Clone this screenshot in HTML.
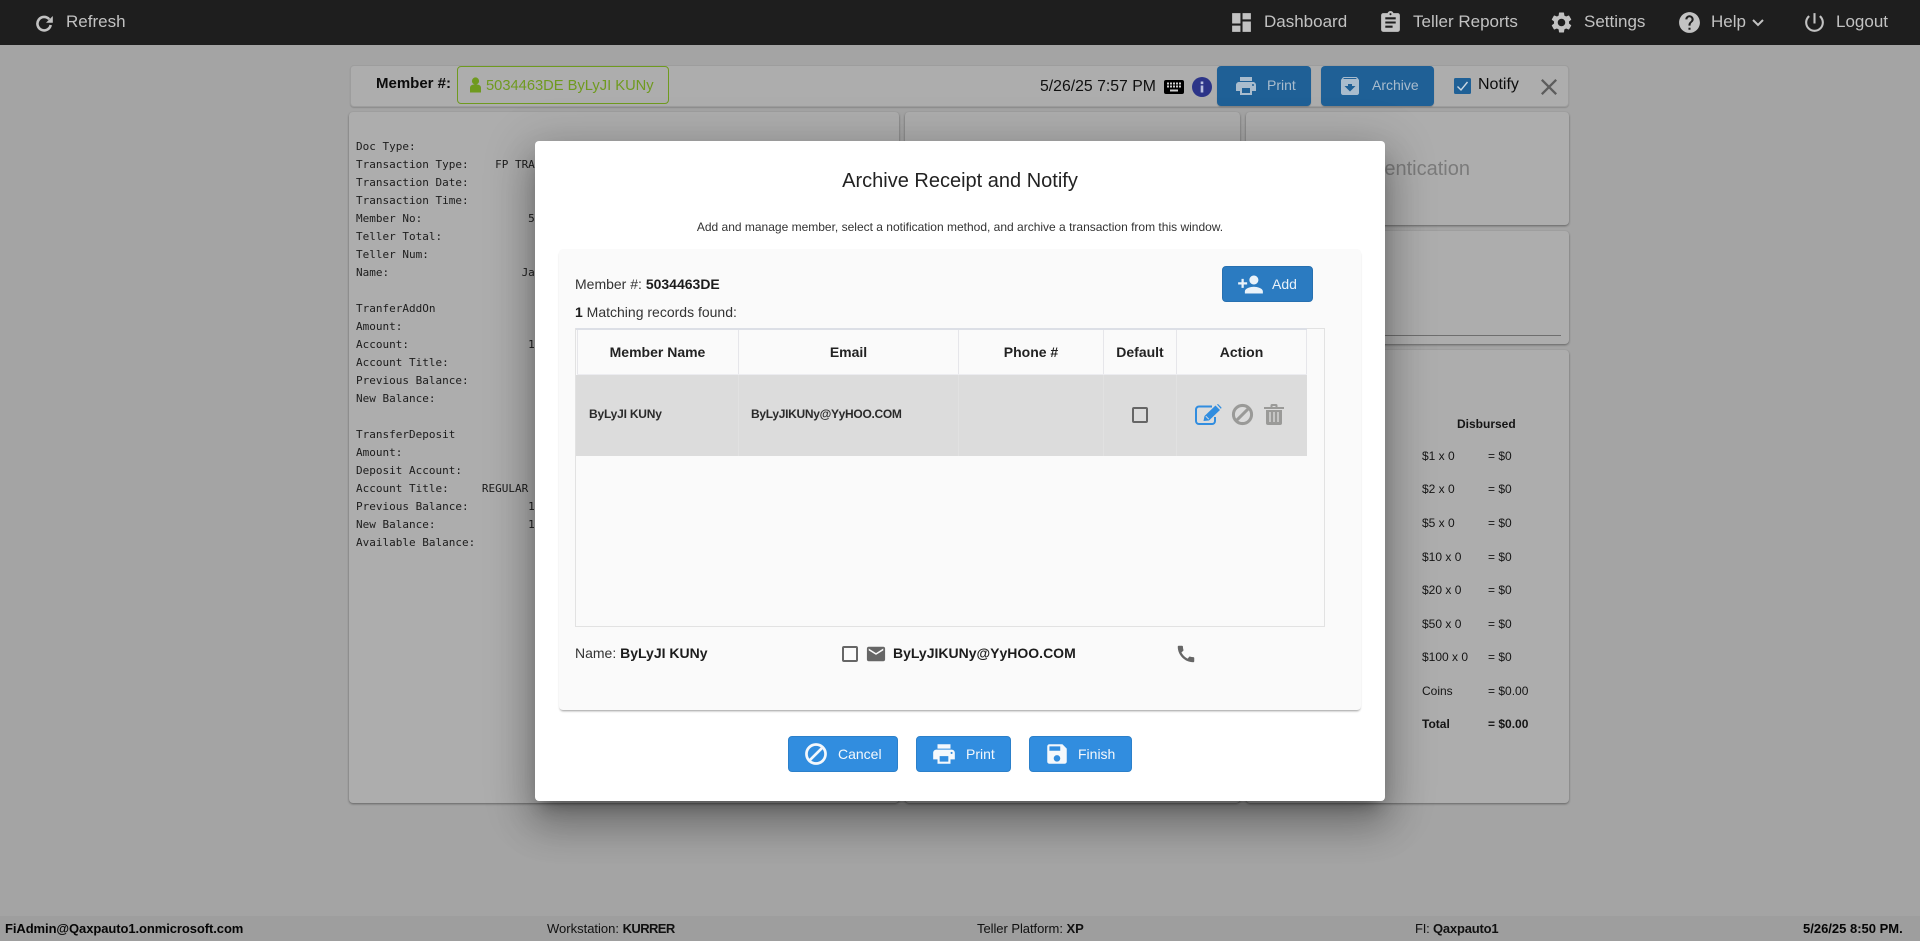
<!DOCTYPE html>
<html><head><meta charset="utf-8"><title>Archive Receipt and Notify</title>
<style>
*{box-sizing:border-box}
html,body{margin:0;padding:0;width:1920px;height:941px;overflow:hidden;background:#a4a4a4;font-family:"Liberation Sans",Arial,sans-serif;color:#111}
.a{position:absolute}
.t{position:absolute;white-space:nowrap;line-height:20px;height:20px}
svg{position:absolute;display:block}
nav{position:absolute;left:0;top:0;width:1920px;height:45px;background:#1e1e1e}
nav .t{font-size:17px;color:#c2c2c2;top:12px}
nav svg{fill:#c2c2c2}
.panel{position:absolute;background:#adadad;border-radius:4px;box-shadow:0 1px 2px rgba(0,0,0,.4)}
.btn{position:absolute;border-radius:4px;color:#fff;font-size:14px}
.btn svg{fill:currentColor}
.top{background:#1f6096;color:#a9bccd;height:40px;top:66px;box-shadow:0 1px 1px rgba(0,0,0,.2)}
.mb{background:#318ddf;color:#f4f8fc;height:36px;top:736px;border:1px solid #2c80ca}
pre{position:absolute;left:356px;top:138px;margin:0;font:11px/18px "DejaVu Sans Mono",monospace;color:#1c1c1c}
.d{font-size:12px;color:#151515}
.modal{position:absolute;left:535px;top:141px;width:850px;height:660px;background:#fff;border-radius:4px;box-shadow:0 11px 15px -7px rgba(0,0,0,.3),0 24px 38px 3px rgba(0,0,0,.2),0 9px 46px 8px rgba(0,0,0,.18)}
.h{font-size:14px;font-weight:bold;color:#222;text-align:center}
.v{position:absolute;width:1px}
</style></head><body>

<nav>
<svg style="left:36px;top:15px;fill:none" width="17" height="17" viewBox="0 0 17 17"><path d="M13.2 4.300A6.700 6.700 0 1 0 14.700 10" fill="none" stroke="#c2c2c2" stroke-width="2.600"/><path d="M16.800 1v6.800H10z" fill="#c2c2c2"/></svg>
<div class="t" style="left:66px">Refresh</div>
<svg style="left:1229px;top:10px" width="25" height="25" viewBox="0 0 24 24"><path d="M3 13h8V3H3v10zm0 8h8v-6H3v6zm10 0h8V11h-8v10zm0-18v6h8V3h-8z"/></svg>
<div class="t" style="left:1264px">Dashboard</div>
<svg style="left:1378px;top:10px" width="25" height="25" viewBox="0 0 24 24"><path d="M19 3h-4.180C14.400 1.840 13.300 1 12 1c-1.300 0-2.400.84-2.820 2H5c-1.100 0-2 .9-2 2v14c0 1.100.9 2 2 2h14c1.100 0 2-.9 2-2V5c0-1.100-.9-2-2-2zm-7 0c.55 0 1 .45 1 1s-.45 1-1 1-1-.45-1-1 .45-1 1-1zm2 14H7v-2h7v2zm3-4H7v-2h10v2zm0-4H7V7h10v2z"/></svg>
<div class="t" style="left:1413px">Teller Reports</div>
<svg style="left:1549px;top:10px" width="25" height="25" viewBox="0 0 24 24"><path d="M19.140 12.940c.04-.3.06-.61.06-.94 0-.32-.02-.64-.07-.94l2.030-1.580c.18-.14.23-.41.12-.61l-1.920-3.320c-.12-.22-.37-.29-.59-.22l-2.390.96c-.5-.38-1.030-.7-1.620-.94l-.36-2.540c-.04-.24-.24-.41-.48-.41h-3.840c-.24 0-.43.17-.47.41l-.36 2.540c-.59.24-1.130.57-1.620.94l-2.390-.96c-.22-.08-.47 0-.59.22L2.740 8.870c-.12.21-.08.47.12.61l2.030 1.580c-.05.3-.09.63-.09.94s.02.64.07.94l-2.030 1.580c-.18.14-.23.41-.12.61l1.920 3.320c.12.22.37.29.59.22l2.390-.96c.5.38 1.030.7 1.620.94l.36 2.540c.05.24.24.41.48.41h3.840c.24 0 .44-.17.47-.41l.36-2.540c.59-.24 1.130-.56 1.620-.94l2.390.96c.22.08.47 0 .59-.22l1.920-3.320c.12-.22.07-.47-.12-.61l-2.010-1.580zM12 15.600c-1.980 0-3.600-1.620-3.600-3.600s1.620-3.600 3.600-3.600 3.600 1.620 3.600 3.600-1.620 3.600-3.600 3.600z"/></svg>
<div class="t" style="left:1584px">Settings</div>
<svg style="left:1677px;top:10px" width="25" height="25" viewBox="0 0 24 24"><path d="M12 2C6.480 2 2 6.480 2 12s4.480 10 10 10 10-4.480 10-10S17.520 2 12 2zm1 17h-2v-2h2v2zm2.070-7.750l-.9.92C13.450 12.900 13 13.500 13 15h-2v-.5c0-1.100.45-2.100 1.170-2.830l1.240-1.260c.37-.36.59-.86.59-1.410 0-1.100-.9-2-2-2s-2 .9-2 2H8c0-2.210 1.790-4 4-4s4 1.790 4 4c0 .88-.36 1.680-.93 2.250z"/></svg>
<div class="t" style="left:1711px">Help</div>
<svg style="left:1751px;top:18px;fill:none;stroke:#c2c2c2;stroke-width:2" width="14" height="10" viewBox="0 0 14 10"><path d="M2 2l5 5 5-5"/></svg>
<svg style="left:1802px;top:10px" width="25" height="25" viewBox="0 0 24 24"><path d="M13 3h-2v10h2V3zm4.830 2.170l-1.420 1.420C17.990 7.860 19 9.810 19 12c0 3.870-3.130 7-7 7s-7-3.130-7-7c0-2.190 1.010-4.140 2.580-5.420L6.170 5.170C4.230 6.820 3 9.260 3 12c0 4.970 4.030 9 9 9s9-4.030 9-9c0-2.740-1.230-5.180-3.170-6.830z"/></svg>
<div class="t" style="left:1836px">Logout</div>
</nav>

<!-- header card -->
<div class="a" style="left:350px;top:65px;width:1219px;height:42px;background:#adadad;border:1px solid #9d9d9d;border-radius:4px;box-shadow:0 1px 1px rgba(0,0,0,.15)"></div>
<div class="t" style="left:376px;top:74px;font-size:15px;font-weight:bold;color:#0c0c0c">Member #:</div>
<div class="a" style="left:457px;top:66px;width:212px;height:38px;border:1px solid #6f9a1f;border-radius:4px"></div>
<svg style="left:469px;top:77px;fill:#6f9a1f" width="13" height="16" viewBox="0 0 13 16"><circle cx="6.500" cy="4" r="3.600"/><path d="M1 15.500V11c0-2.400 2-3.600 5.500-3.600S12 8.600 12 11v4.500z"/></svg>
<div class="t" style="left:486px;top:76px;font-size:14.7px;color:#6f9a1f">5034463DE ByLyJI KUNy</div>
<div class="t" style="left:1040px;top:77px;font-size:15.8px;color:#101010">5/26/25 7:57 PM</div>
<svg style="left:1164px;top:80px" width="20" height="14" viewBox="0 0 20 14"><rect width="20" height="14" rx="2" fill="#000"/><g fill="#cfcfcf"><rect x="3" y="2.500" width="2" height="2"/><rect x="6" y="2.500" width="2" height="2"/><rect x="9" y="2.500" width="2" height="2"/><rect x="12" y="2.500" width="2" height="2"/><rect x="15" y="2.500" width="2" height="2"/><rect x="3" y="5.500" width="2" height="2"/><rect x="6" y="5.500" width="2" height="2"/><rect x="9" y="5.500" width="2" height="2"/><rect x="12" y="5.500" width="2" height="2"/><rect x="15" y="5.500" width="2" height="2"/><rect x="6" y="9.500" width="8" height="2"/></g></svg>
<svg style="left:1192px;top:77px" width="20" height="20" viewBox="0 0 20 20"><circle cx="10" cy="10" r="10" fill="#2c3488"/><rect x="8.700" y="8.500" width="2.600" height="7" fill="#b9bfe0"/><rect x="8.700" y="4.500" width="2.600" height="2.600" fill="#b9bfe0"/></svg>
<div class="btn top" style="left:1217px;width:94px">
<svg style="left:17px;top:8px" width="24" height="24" viewBox="0 0 24 24"><path d="M19 8H5c-1.660 0-3 1.340-3 3v6h4v4h12v-4h4v-6c0-1.660-1.340-3-3-3zm-3 11H8v-5h8v5zm3-7c-.55 0-1-.45-1-1s.45-1 1-1 1 .45 1 1-.45 1-1 1zm-1-9H6v4h12V3z"/></svg>
<div class="t" style="left:50px;top:9px">Print</div></div>
<div class="btn top" style="left:1321px;width:113px">
<svg style="left:17px;top:8px" width="24" height="24" viewBox="0 0 24 24"><path d="M20.54 5.230l-1.390-1.680C18.880 3.210 18.470 3 18 3H6c-.470 0-.880.210-1.160.550L3.460 5.230C3.170 5.570 3 6.020 3 6.500V19c0 1.100.900 2 2 2h14c1.100 0 2-.900 2-2V6.500c0-.480-.170-.930-.460-1.270zM12 17.500L6.500 12H10v-2h4v2h3.500L12 17.500zM5.120 5l.810-1h12l.940 1H5.120z"/></svg>
<div class="t" style="left:51px;top:9px">Archive</div></div>
<svg style="left:1454px;top:78px" width="17" height="16" viewBox="0 0 17 16"><rect width="17" height="16" rx="1.500" fill="#1f6096"/><path d="M3.500 8.500l3.500 3.500 6.500-8" fill="none" stroke="#c9d6e2" stroke-width="1.400"/></svg>
<div class="t" style="left:1478px;top:75px;font-size:16px;color:#0c0c0c">Notify</div>
<svg style="left:1541px;top:79px;fill:#5c5c5c" width="16" height="16" viewBox="5 5 14 14"><path d="M19 6.410L17.590 5 12 10.590 6.410 5 5 6.410 10.590 12 5 17.590 6.410 19 12 13.410 17.590 19 19 17.590 13.410 12z"/></svg>

<!-- panels -->
<div class="panel" style="left:349px;top:112px;width:550px;height:691px"></div>
<div class="panel" style="left:905px;top:112px;width:335px;height:691px"></div>
<div class="panel" style="left:1246px;top:112px;width:323px;height:113px"></div>
<div class="panel" style="left:1246px;top:231px;width:323px;height:113px"></div>
<div class="panel" style="left:1246px;top:350px;width:323px;height:453px"></div>
<div class="a" style="left:1250px;top:335px;width:311px;height:1px;background:#6e6e6e"></div>
<div class="t" style="left:1300px;width:170px;top:159px;text-align:right;font-size:20px;color:#7b7b7b">Authentication</div>

<pre>Doc Type:
Transaction Type:    FP TRANSFER
Transaction Date:          5
Transaction Time:
Member No:                5
Teller Total:
Teller Num:
Name:                    Ja

TranferAddOn
Amount:
Account:                  1
Account Title:
Previous Balance:          4
New Balance:               4

TransferDeposit
Amount:
Deposit Account:
Account Title:     REGULAR  
Previous Balance:         1
New Balance:              1
Available Balance:</pre>

<div class="t d" style="left:1457px;top:414px;font-weight:bold">Disbursed</div>
<div class="t d" style="left:1422px;top:446px">$1 x 0</div><div class="t d" style="left:1488px;top:446px">= $0</div>
<div class="t d" style="left:1422px;top:479px">$2 x 0</div><div class="t d" style="left:1488px;top:479px">= $0</div>
<div class="t d" style="left:1422px;top:513px">$5 x 0</div><div class="t d" style="left:1488px;top:513px">= $0</div>
<div class="t d" style="left:1422px;top:547px">$10 x 0</div><div class="t d" style="left:1488px;top:547px">= $0</div>
<div class="t d" style="left:1422px;top:580px">$20 x 0</div><div class="t d" style="left:1488px;top:580px">= $0</div>
<div class="t d" style="left:1422px;top:614px">$50 x 0</div><div class="t d" style="left:1488px;top:614px">= $0</div>
<div class="t d" style="left:1422px;top:647px">$100 x 0</div><div class="t d" style="left:1488px;top:647px">= $0</div>
<div class="t d" style="left:1422px;top:681px">Coins</div><div class="t d" style="left:1488px;top:681px">= $0.00</div>
<div class="t d" style="left:1422px;top:714px;font-weight:bold">Total</div><div class="t d" style="left:1488px;top:714px;font-weight:bold">= $0.00</div>

<!-- footer -->
<div class="a" style="left:0;top:916px;width:1920px;height:25px;background:#9e9e9e"></div>
<div class="t" style="left:5px;top:919px;font-size:13px;font-weight:bold;color:#050505;letter-spacing:-.08px">FiAdmin@Qaxpauto1.onmicrosoft.com</div>
<div class="t" style="left:547px;top:919px;font-size:13px;color:#111">Workstation: <b style="letter-spacing:-.6px">KURRER</b></div>
<div class="t" style="left:977px;top:919px;font-size:13px;color:#111;letter-spacing:-.05px">Teller Platform: <b>XP</b></div>
<div class="t" style="left:1415px;top:919px;font-size:13px;color:#111;letter-spacing:-.2px">FI: <b>Qaxpauto1</b></div>
<div class="t" style="left:1803px;top:919px;font-size:13px;font-weight:bold;color:#050505">5/26/25 8:50 PM.</div>

<!-- modal -->
<div class="modal"></div>
<div class="t" style="left:535px;width:850px;top:171px;text-align:center;font-size:20px;color:#222">Archive Receipt and Notify</div>
<div class="t" style="left:535px;width:850px;top:217px;text-align:center;font-size:12px;color:#333">Add and manage member, select a notification method, and archive a transaction from this window.</div>
<div class="a" style="left:559px;top:249px;width:802px;height:461px;background:#fafafa;border-radius:4px;box-shadow:0 2px 2px -1px rgba(0,0,0,.4)"></div>
<div class="t" style="left:575px;top:274px;font-size:14px;color:#333">Member #: <b style="color:#1c1c1c">5034463DE</b></div>
<div class="btn" style="left:1222px;top:266px;width:91px;height:36px;background:#2b7bc1;border:1px solid #2770b0;color:#eaf2f9">
<svg style="left:14px;top:4px" width="27" height="27" viewBox="0 0 24 24"><path d="M15 12c2.210 0 4-1.790 4-4s-1.790-4-4-4-4 1.790-4 4 1.790 4 4 4zm-9-2V7H4v3H1v2h3v3h2v-3h3v-2H6zm9 4c-2.670 0-8 1.340-8 4v2h16v-2c0-2.660-5.330-4-8-4z"/></svg>
<div class="t" style="left:49px;top:7px">Add</div></div>
<div class="t" style="left:575px;top:302px;font-size:14px;color:#333"><b style="color:#1c1c1c">1</b> Matching records found:</div>

<!-- table -->
<div class="a" style="left:575px;top:328px;width:750px;height:299px;background:#fafafa;border:1px solid #e2e2e2"></div>
<div class="a" style="left:576px;top:328px;width:731px;height:2px;background:#dcdfe6"></div>
<div class="a" style="left:576px;top:375px;width:731px;height:81px;background:#dcdcdc"></div>
<div class="a" style="left:577px;top:374px;width:730px;height:1px;background:#ececf0"></div>
<div class="v" style="left:577px;top:330px;height:44px;background:#e6e6ea"></div>
<div class="v" style="left:738px;top:330px;height:44px;background:#e6e6ea"></div>
<div class="v" style="left:958px;top:330px;height:44px;background:#e6e6ea"></div>
<div class="v" style="left:1103px;top:330px;height:44px;background:#e6e6ea"></div>
<div class="v" style="left:1176px;top:330px;height:44px;background:#e6e6ea"></div>
<div class="v" style="left:1306px;top:330px;height:44px;background:#e6e6ea"></div>
<div class="v" style="left:738px;top:375px;height:81px;background:#e1e1e1"></div>
<div class="v" style="left:958px;top:375px;height:81px;background:#e1e1e1"></div>
<div class="v" style="left:1103px;top:375px;height:81px;background:#e1e1e1"></div>
<div class="v" style="left:1176px;top:375px;height:81px;background:#e1e1e1"></div>
<div class="t h" style="left:577px;width:161px;top:342px">Member Name</div>
<div class="t h" style="left:739px;width:219px;top:342px">Email</div>
<div class="t h" style="left:959px;width:144px;top:342px">Phone #</div>
<div class="t h" style="left:1104px;width:72px;top:342px">Default</div>
<div class="t h" style="left:1177px;width:129px;top:342px">Action</div>
<div class="t" style="left:589px;top:404px;font-size:12px;font-weight:bold;color:#2a2a2a;letter-spacing:-.2px">ByLyJI KUNy</div>
<div class="t" style="left:751px;top:404px;font-size:12px;font-weight:bold;color:#2a2a2a;letter-spacing:-.3px">ByLyJIKUNy@YyHOO.COM</div>
<div class="a" style="left:1132px;top:407px;width:16px;height:16px;border:2px solid #666;border-radius:2px"></div>
<svg style="left:1195px;top:404px" width="27" height="21" viewBox="0 0 27 21"><path d="M17 2.500H4a3 3 0 0 0-3 3V17a3 3 0 0 0 3 3h13a3 3 0 0 0 3-3v-4" fill="none" stroke="#318ddf" stroke-width="2"/><path d="M8.500 17l1-5L20.500 1.500l4.500 4.500L14 16.500z" fill="#318ddf"/><path d="M22 .5l1-.5 3.500 3.500-.5 1.500z" fill="#318ddf"/><path d="M10.800 12.200l3 3" stroke="#dcdcdc" stroke-width="1"/></svg>
<svg style="left:1230px;top:402px" width="25" height="25" viewBox="0 0 24 24" fill="none" stroke="#9a9a98" stroke-width="2.900"><circle cx="12" cy="12" r="8.700"/><path d="M5.800 18.200L18.200 5.800"/></svg>
<svg style="left:1264px;top:404px" width="20" height="21" viewBox="0 0 20 21"><path d="M0 3h20v2H0zM6.500 3V1.500A1.500 1.500 0 0 1 8 0h4a1.500 1.500 0 0 1 1.500 1.500V3h-2V2h-3v1z" fill="#9a9a98"/><path d="M2 6h16v13a2 2 0 0 1-2 2H4a2 2 0 0 1-2-2z" fill="#9a9a98"/><path d="M6 8v10M10 8v10M14 8v10" stroke="#dcdcdc" stroke-width="1.300"/></svg>

<!-- name row -->
<div class="t" style="left:575px;top:643px;font-size:14px;color:#333">Name: <b style="color:#1c1c1c">ByLyJI KUNy</b></div>
<div class="a" style="left:842px;top:646px;width:16px;height:16px;border:2px solid #666;border-radius:2px"></div>
<svg style="left:866px;top:643px;fill:#666" width="20" height="22" viewBox="1 0 22 24"><path d="M20 4H4c-1.100 0-1.990.9-1.990 2L2 18c0 1.100.9 2 2 2h16c1.100 0 2-.9 2-2V6c0-1.100-.9-2-2-2zm0 4l-8 5-8-5V6l8 5 8-5v2z"/></svg>
<div class="t" style="left:893px;top:643px;font-size:14px;font-weight:bold;color:#1c1c1c">ByLyJIKUNy@YyHOO.COM</div>
<svg style="left:1175px;top:643px;fill:#666" width="22" height="22" viewBox="0 0 24 24"><path d="M20.010 15.380c-1.230 0-2.420-.2-3.530-.56-.35-.12-.74-.03-1.010.24l-1.570 1.970c-2.830-1.350-5.480-3.900-6.890-6.830l1.950-1.660c.27-.28.35-.67.24-1.020-.37-1.110-.56-2.300-.56-3.530 0-.54-.45-.99-.99-.99H4.190C3.650 3 3 3.240 3 3.990 3 13.280 10.730 21 20.010 21c.71 0 .99-.63.99-1.180v-3.450c0-.54-.45-.99-.99-.99z"/></svg>

<!-- modal buttons -->
<div class="btn mb" style="left:788px;width:110px">
<svg style="left:14px;top:4px" width="26" height="26" viewBox="0 0 24 24" style="fill:none"><g fill="none" stroke="#f4f8fc" stroke-width="2.500"><circle cx="12" cy="12" r="8.800"/><path d="M5.800 18.200L18.200 5.800"/></g></svg>
<div class="t" style="left:49px;top:7px">Cancel</div></div>
<div class="btn mb" style="left:916px;width:95px">
<svg style="left:14px;top:4px" width="26" height="26" viewBox="0 0 24 24"><path d="M19 8H5c-1.660 0-3 1.340-3 3v6h4v4h12v-4h4v-6c0-1.660-1.340-3-3-3zm-3 11H8v-5h8v5zm3-7c-.55 0-1-.45-1-1s.45-1 1-1 1 .45 1 1-.45 1-1 1zm-1-9H6v4h12V3z"/></svg>
<div class="t" style="left:49px;top:7px">Print</div></div>
<div class="btn mb" style="left:1029px;width:103px">
<svg style="left:14px;top:4px" width="26" height="26" viewBox="0 0 24 24"><path d="M17 3H5c-1.110 0-2 .9-2 2v14c0 1.100.89 2 2 2h14c1.100 0 2-.9 2-2V7l-4-4zm-5 16c-1.660 0-3-1.340-3-3s1.340-3 3-3 3 1.340 3 3-1.340 3-3 3zm3-10H5V5h10v4z"/></svg>
<div class="t" style="left:48px;top:7px">Finish</div></div>

</body></html>
